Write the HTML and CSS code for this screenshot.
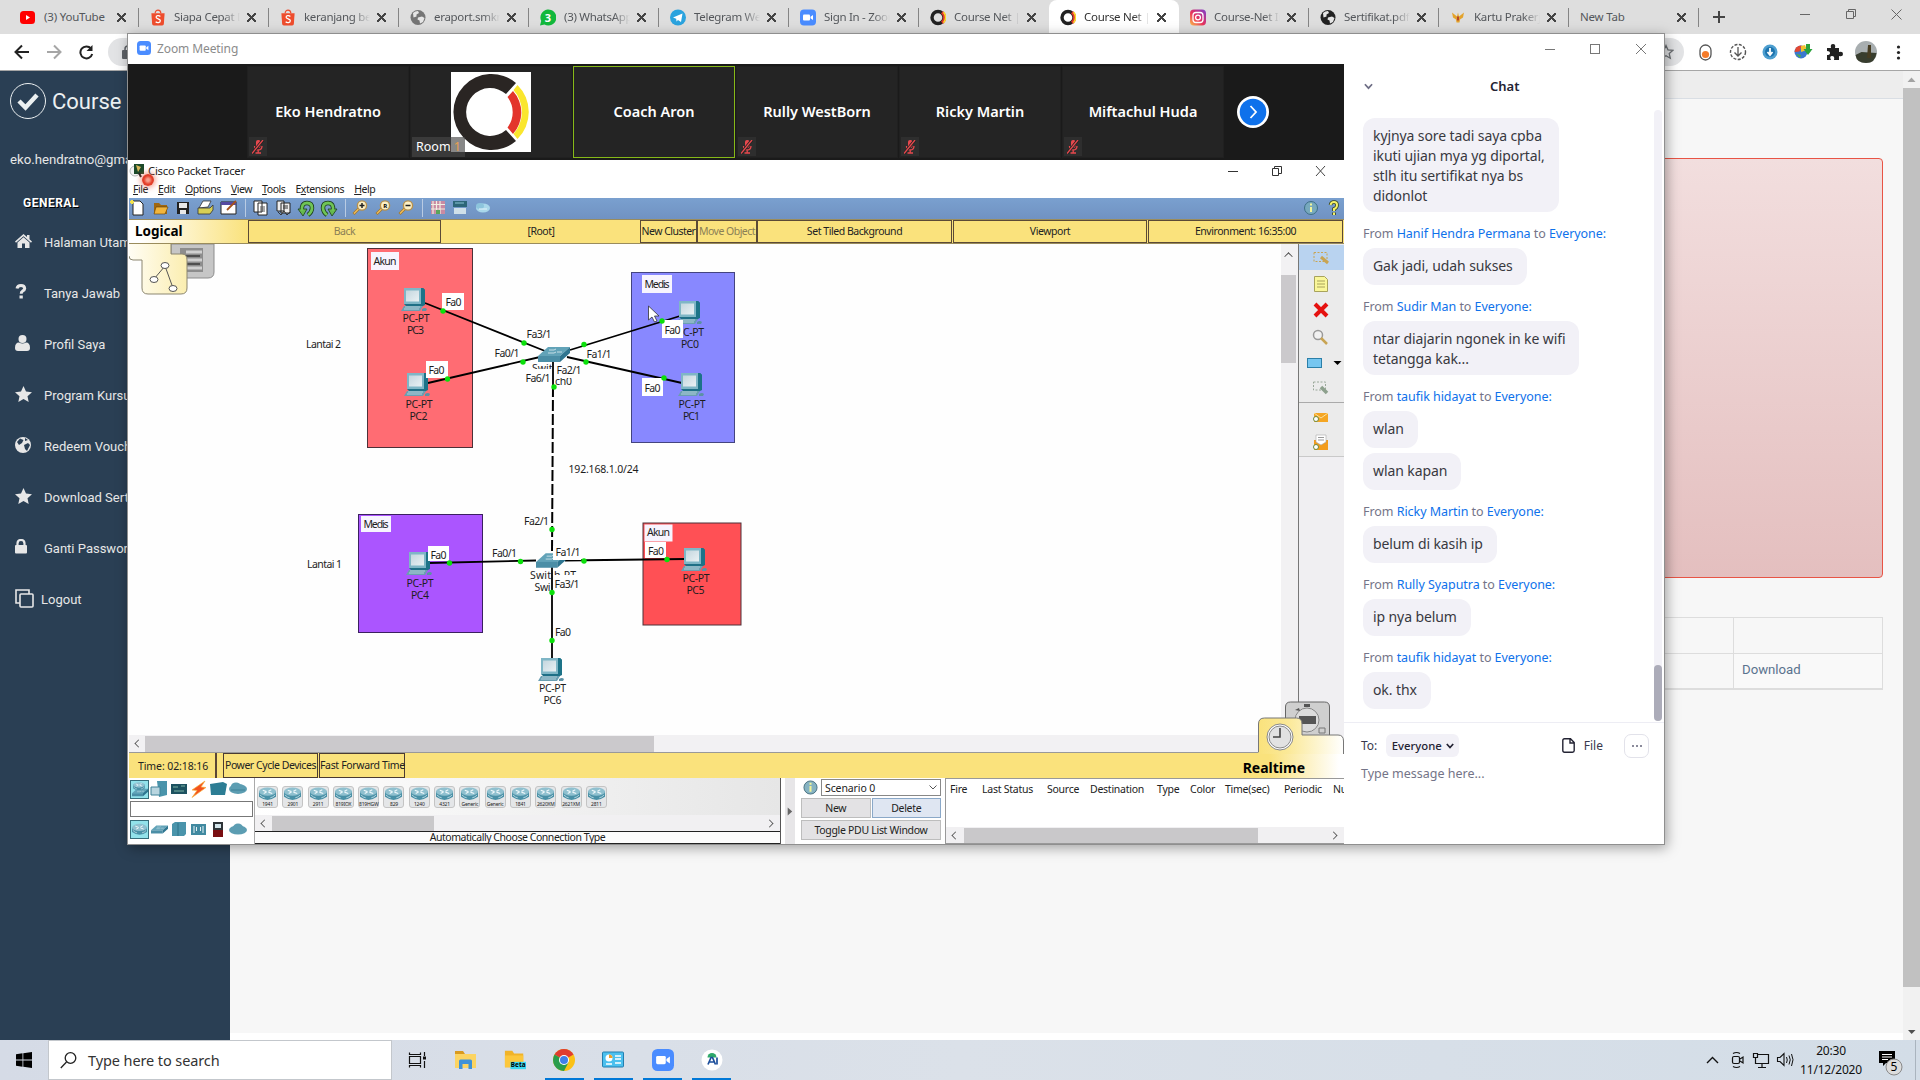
FILE: index.html
```html
<!DOCTYPE html>
<html lang="id">
<head>
<meta charset="utf-8">
<title>Course Net</title>
<link rel="stylesheet" href="styles.css">
</head>
<body>
<svg class="defs" width="0" height="0">
  <defs>
    <linearGradient id="gScreen" x1="0" y1="0" x2="1" y2="1"><stop offset="0" stop-color="#c4d6de"/><stop offset="1" stop-color="#eaf1f4"/></linearGradient>
    <linearGradient id="gTab" x1="0" y1="0" x2="1" y2="0"><stop offset="0" stop-color="#fffdf4"/><stop offset="1" stop-color="#fbeeb0"/></linearGradient>
    <linearGradient id="gRt" x1="0" y1="0" x2="1" y2="0"><stop offset="0" stop-color="#fae27c"/><stop offset=".35" stop-color="#fbe998"/><stop offset="1" stop-color="#fff"/></linearGradient>
    <linearGradient id="gIg" x1="0" y1="1" x2="1" y2="0"><stop offset="0" stop-color="#fdc04a"/><stop offset=".45" stop-color="#e8325c"/><stop offset="1" stop-color="#7a3fd0"/></linearGradient>
  </defs>
  <symbol id="pc" viewBox="0 0 28 24">
    <path d="M3 0H22L24 2V17L20 19H6L3 16Z" fill="#1f6f86"/><path d="M3 0H20V16H3Z" fill="#7fb6c6"/><path d="M5 2.500H18V13.500H5Z" fill="url(#gScreen)"/>
    <path d="M3 18H22L19 23H0Z" fill="#6a9fb2"/><path d="M4 19H19M3 21H18" stroke="#c3dbe3" stroke-width=".8"/><path d="M21 21q3-2 5 0l-1 2h-4z" fill="#5b91a5"/><path d="M20 0h2l2 2v14l-4 2z" fill="#1d7388"/>
  </symbol>
  <symbol id="switch" viewBox="0 0 32 15"><path d="M10 0H32L22 9H0Z" fill="#62a3b8"/><path d="M0 9H22V15H0Z" fill="#4b8ea6"/><path d="M22 9L32 0V6L22 15Z" fill="#2e7590"/><path d="M11 3h5l2-1M19 5h5M10 6h6l2-1" stroke="#c5dee6" fill="none"/></symbol>
  <symbol id="router" viewBox="0 0 18 14"><path d="M0 4v6q9 6.500 18 0V4z" fill="#4990a6"/><ellipse cx="9" cy="4.500" rx="9" ry="4.300" fill="#8fc0cf"/><path d="M4 3l4 1.500M10 5l4 1.500M13 2.500L10 4M5 6.500L8 5" stroke="#eef7fa" stroke-width="1.200"/><path d="M1 8q3 3 5 3M12 11q3-.5 5-3" stroke="#b9d8e1" fill="none"/></symbol>
  <symbol id="shopee" viewBox="0 0 16 18"><path d="M1 4.500H15L14.200 16Q14 17.500 12.500 17.500H3.500Q2 17.500 1.800 16Z" fill="#ee4d2d"/><path d="M5 4.500C5 0 11 0 11 4.500" fill="none" stroke="#ee4d2d" stroke-width="1.300"/><path d="M10.500 8C9 6.500 5.800 6.800 6 8.700 6.200 10.700 10.500 10.300 10.500 12.500 10.400 14.800 7 15 5.500 13.500" fill="none" stroke="#fff" stroke-width="1.300"/></symbol>
  <symbol id="globe" viewBox="0 0 16 16"><circle cx="8" cy="8" r="7.500" fill="currentColor"/><path d="M3 3.500Q5 1.500 8 1.500L9 3.500 6.500 5 6.500 7 3.500 8ZM8 8l4-1 2.500 1.500-1.500 4-3 1.500-.5-3L7.500 10Z" fill="#e6e6e6"/></symbol>
  <symbol id="cn" viewBox="0 0 16 16"><circle cx="8" cy="8" r="6" fill="none" stroke="#222" stroke-width="3.400"/><path d="M12 2.800A6.500 6.500 0 0 1 12 13.200" fill="none" stroke="#e33a2c" stroke-width="3.200"/><path d="M13.500 2.800A7.600 7.600 0 0 1 13.500 13.200" fill="none" stroke="#f9df2c" stroke-width="1.500"/></symbol>
  <symbol id="zoom" viewBox="0 0 16 16"><rect width="16" height="16" rx="4" fill="#4a8cff"/><rect x="3" y="5" width="7" height="6" rx="1" fill="#fff"/><path d="M10.500 7.300L13 5.500V10.500L10.500 8.700Z" fill="#fff"/></symbol>
  <symbol id="mute" viewBox="0 0 12 14"><rect x="4" y="0" width="4.500" height="8" rx="2" fill="#e8484d"/><path d="M2.500 6q0 4 3.700 4T10 6M6.200 10v3M3.500 13h5.500" fill="none" stroke="#e8484d" stroke-width="1.300"/><path d="M0 13.500L11 0" stroke="#242424" stroke-width="3"/><path d="M0 13.500L11 0" stroke="#e8484d" stroke-width="1.300"/></symbol>
  <symbol id="star" viewBox="0 0 17 16"><path d="M8.500 0L11 5.500 17 6.200 12.500 10.200 13.700 16 8.500 13 3.300 16 4.500 10.200 0 6.200 6 5.500Z" fill="currentColor"/></symbol>
  <symbol id="mag" viewBox="0 0 16 16"><path d="M7 9L1.500 14.500" stroke="#a5782b" stroke-width="2.800"/><path d="M7 9L2 14" stroke="#f0c060" stroke-width="1.200"/><circle cx="10" cy="6" r="4.600" fill="#fdf0c4" stroke="#b8924e" stroke-width="1.400"/></symbol>
</svg>

<div class="browser">
  <div class="tabs">
    <div class="tab"><svg class="fav" viewBox="0 0 16 16"><rect y="1.500" width="15" height="13" rx="3.500" fill="#f00"/><path d="M6 5.500L10 8 6 10.500Z" fill="#fff"/></svg><span class="t full">(3) YouTube</span><i class="x"></i></div>
    <div class="tab"><svg class="fav"><use href="#shopee"/></svg><span class="t">Siapa Cepat D</span><i class="x"></i></div>
    <div class="tab"><svg class="fav"><use href="#shopee"/></svg><span class="t">keranjang bel</span><i class="x"></i></div>
    <div class="tab"><svg class="fav gray"><use href="#globe"/></svg><span class="t">eraport.smkn</span><i class="x"></i></div>
    <div class="tab"><svg class="fav" viewBox="0 0 16 16"><path d="M0 16L1.200 11.500A8 8 0 1 1 4.500 15Z" fill="#12b83c"/><text x="8" y="12" text-anchor="middle" class="favnum">3</text></svg><span class="t">(3) WhatsApp</span><i class="x"></i></div>
    <div class="tab"><svg class="fav" viewBox="0 0 16 16"><circle cx="8" cy="8" r="8" fill="#2ba3de"/><path d="M3 8L12.500 4 11 12.500 8 10.500 6.500 12 6.200 9.300Z" fill="#fff"/></svg><span class="t">Telegram Web</span><i class="x"></i></div>
    <div class="tab"><svg class="fav"><use href="#zoom"/></svg><span class="t">Sign In - Zoom</span><i class="x"></i></div>
    <div class="tab nosep"><svg class="fav"><use href="#cn"/></svg><span class="t">Course Net | B</span><i class="x"></i></div>
    <div class="tab on nosep"><svg class="fav"><use href="#cn"/></svg><span class="t">Course Net | B</span><i class="x"></i></div>
    <div class="tab"><svg class="fav" viewBox="0 0 16 16"><rect width="16" height="16" rx="4" fill="url(#gIg)"/><rect x="3" y="3" width="10" height="10" rx="3" fill="none" stroke="#fff" stroke-width="1.300"/><circle cx="8" cy="8" r="2.400" fill="none" stroke="#fff" stroke-width="1.300"/></svg><span class="t">Course-Net In</span><i class="x"></i></div>
    <div class="tab"><svg class="fav dark"><use href="#globe"/></svg><span class="t">Sertifikat.pdf</span><i class="x"></i></div>
    <div class="tab"><svg class="fav" viewBox="0 0 16 16"><path d="M2 3L7 7 8 3 9 7 14 3 13 8 10 10 9.500 13H6.500L6 10 3 8Z" fill="#e3a32c"/><path d="M7 7h2v4H7z" fill="#b6462a"/></svg><span class="t">Kartu Prakerja</span><i class="x"></i></div>
    <div class="tab"><span class="t full wide">New Tab</span><i class="x"></i></div>
    <svg class="plus" viewBox="0 0 12 12"><path d="M6 0V12M0 6H12" stroke="#444" stroke-width="2"/></svg>
    <svg class="winctl" viewBox="0 0 102 12"><path d="M0 6.500H10" stroke="#666"/><path d="M46.500 3.500h7v7h-7zM48.500 3.500v-2h7v7h-2" fill="none" stroke="#666"/><path d="M91.500 1.500l10 10M101.500 1.500l-10 10" stroke="#666"/></svg>
  </div>
  <div class="urlbar">
    <svg class="nav" viewBox="0 0 80 16"><path d="M15 8H2M8 1.500L1.500 8 8 14.500" fill="none" stroke="#222" stroke-width="2"/><path d="M33 8H46M40 1.500L46.500 8 40 14.500" fill="none" stroke="#a6a6a6" stroke-width="2"/><path d="M77 4.500A6 6 0 1 0 78.200 10" fill="none" stroke="#222" stroke-width="2"/><path d="M78.500 1V7H72.500Z" fill="#222"/></svg>
    <div class="omni"><svg viewBox="0 0 12 14" width="12" height="14"><rect y="5" width="12" height="9" rx="1" fill="#5f6368"/><path d="M3 6V4q0-3 3-3t3 3v2" fill="none" stroke="#5f6368" stroke-width="1.500"/></svg><svg viewBox="0 0 16 16" width="16" height="16"><path d="M8 1.500L10 6 14.800 6.400 11.200 9.600 12.300 14.300 8 11.800 3.700 14.300 4.800 9.600 1.200 6.400 6 6Z" fill="none" stroke="#6b6f73" stroke-width="1.300"/></svg></div>
    <svg class="exts" viewBox="0 0 206 24">
      <rect x="4" y="5" width="11" height="15" rx="5.500" fill="#fff" stroke="#555" stroke-width="1.300"/><circle cx="9.500" cy="14.500" r="3.600" fill="#f47b2a"/>
      <circle cx="42" cy="12" r="7.500" fill="none" stroke="#555" stroke-width="1.400" stroke-dasharray="3 1.500"/><path d="M42 7v9M38.500 12.500L42 16l3.500-3.500" fill="none" stroke="#555" stroke-width="1.300"/>
      <circle cx="74" cy="12" r="7.500" fill="#4e9fd0"/><circle cx="74" cy="12" r="5" fill="#1d74ae"/><path d="M74 8v6M71.500 12l2.500 3 2.500-3" fill="none" stroke="#fff" stroke-width="1.800"/>
      <circle cx="105" cy="12" r="6.500" fill="#3b78cf"/><path d="M98.500 12a6.500 6.500 0 0 1 7-6.500l-2 6z" fill="#e34832"/><path d="M105 6l4-1 2 5-6 2z" fill="#f2c12e"/><path d="M110 4h4v5h2.500l-4.500 6-4.500-6h2.500z" fill="#2ba23c"/><path d="M100 14l5 1-1 3z" fill="#4fae4a"/>
      <path d="M131 8h4q-1-4 2-4t2 4h4v4q4-1 4 2t-4 2v4h-5q1-4-2-4t-1 4h-4v-5q3 0 3-2t-3-2z" fill="#222"/>
      <circle cx="170" cy="12" r="11" fill="#a8aeb0"/><path d="M159.500 15l6-3 15 1q-1 10-10.500 10T159.500 15z" fill="#383d2e"/><path d="M172 5h3v13h-4z" fill="#463c22"/>
      <g fill="#222"><circle cx="202.500" cy="7" r="1.600"/><circle cx="202.500" cy="12.500" r="1.600"/><circle cx="202.500" cy="18" r="1.600"/></g>
    </svg>
  </div>
  <div class="page">
    <nav class="side">
      <div class="brand"><svg viewBox="0 0 38 38" width="38" height="38"><circle cx="19" cy="19" r="17.500" fill="none" stroke="#ecf0f1"/><path d="M10 19l6.500 6.500L28 13" fill="none" stroke="#ecf0f1" stroke-width="4.500"/></svg><span>Course</span></div>
      <div class="mail">eko.hendratno@gmail.com</div>
      <div class="gen">GENERAL</div>
      <a><svg viewBox="0 0 17 16"><path d="M8.500 1L0 8.500 1 9.700 8.500 3.200 16 9.700 17 8.500 14.500 6.200V2H12V4Z" fill="currentColor"/><path d="M2.500 9.500L8.500 4.300 14.500 9.500V15H10V10.500H7V15H2.500Z" fill="currentColor"/></svg>Halaman Utama</a>
      <a><svg viewBox="0 0 17 16"><path d="M2 4.500Q2.500 1.500 6 1.500T9.700 4.500Q9.500 6.300 7.500 7.200 6.200 8 6.200 9.800" fill="none" stroke="currentColor" stroke-width="3"/><path d="M4.500 11.500h3.300v3H4.500z" fill="currentColor"/></svg>Tanya Jawab</a>
      <a><svg viewBox="0 0 17 16"><circle cx="7.500" cy="4" r="4" fill="currentColor"/><path d="M0 13Q0 7.500 4 7.500 7.500 9.500 11 7.500 15 7.500 15 13 15 16 12 16H3Q0 16 0 13Z" fill="currentColor"/></svg>Profil Saya</a>
      <a><svg><use href="#star"/></svg>Program Kursus</a>
      <a><svg viewBox="0 0 17 16"><circle cx="8" cy="8" r="8" fill="currentColor"/><path d="M5 1.500L8.500 3 7 6 4 8 2 5ZM9 8l4-2 2 2-3 6-2-2ZM10 1l3 2-3 1z" fill="#2a3f54"/></svg>Redeem Voucher</a>
      <a><svg><use href="#star"/></svg>Download Sertifikat</a>
      <a><svg viewBox="0 0 17 16"><rect y="6" width="12" height="8.500" rx="1" fill="currentColor"/><path d="M2.500 7V4.500Q2.500 1 6 1T9.500 4.500V7" fill="none" stroke="currentColor" stroke-width="2.200"/></svg>Ganti Password</a>
      <a class="out"><svg viewBox="0 0 19 19"><path d="M5 14H1V1H14V5" fill="none" stroke="currentColor" stroke-width="1.600"/><rect x="5" y="5" width="13" height="13" rx="1" fill="none" stroke="currentColor" stroke-width="1.600"/></svg>Logout</a>
    </nav>
    <main class="main">
      <div class="topnav"></div>
      <div class="body">
        <div class="alert"></div>
        <div class="grid"><div></div><div></div><div></div><div class="dl">Download</div></div>
      </div>
    </main>
    <div class="vbar"><svg viewBox="0 0 17 17"><path d="M4.500 11L8.500 6.500 12.500 11Z" fill="#a3a3a3"/></svg><div class="thumb"></div><svg viewBox="0 0 17 17"><path d="M5 7H12.500L8.700 11Z" fill="#505050"/></svg></div>
  </div>
</div>

<section class="zoomwin">
  <header class="ztitle"><svg width="14" height="14"><use href="#zoom"/></svg><span>Zoom Meeting</span><svg class="zctl" viewBox="0 0 102 12"><path d="M0 6.500H10" stroke="#777"/><rect x="45.500" y="1.500" width="9" height="9" fill="none" stroke="#777"/><path d="M91 1l10 10M101 1l-10 10" stroke="#777"/></svg></header>
  <div class="zbody">
    <div class="share">
      <div class="gallery">
        <div class="tile"><b>Eko Hendratno</b><span class="mic"><svg><use href="#mute"/></svg></span></div>
        <div class="tile"><svg class="clogo" viewBox="0 0 80 80"><rect width="80" height="80" fill="#fff"/><path d="M65 11A38 38 0 1 0 65 69L55 58A24 24 0 1 1 55 22Z" fill="#2a2523"/><path d="M66.500 13A38 38 0 0 1 66.500 67L62.500 62A33 33 0 0 0 62.500 18Z" fill="#fae62d"/><path d="M62 19A32 32 0 0 1 62 62L56.500 55.500A25 25 0 0 0 56.500 25Z" fill="#e3342c"/></svg><span class="room">Room <em>1</em></span></div>
        <div class="tile act"><b>Coach Aron</b></div>
        <div class="tile"><b>Rully WestBorn</b><span class="mic"><svg><use href="#mute"/></svg></span></div>
        <div class="tile"><b>Ricky Martin</b><span class="mic"><svg><use href="#mute"/></svg></span></div>
        <div class="tile"><b>Miftachul Huda</b><span class="mic"><svg><use href="#mute"/></svg></span></div>
        <svg class="next" viewBox="0 0 32 32"><circle cx="16" cy="16" r="16" fill="#fff"/><circle cx="16" cy="16" r="13.300" fill="#0e71eb"/><path d="M13.500 10l5.500 6-5.500 6" fill="none" stroke="#fff" stroke-width="1.800"/></svg>
      </div>
      <div class="pt">
        <div class="pttitle"><svg width="24" height="22" viewBox="0 0 24 22"><circle cx="6" cy="11" r="5" fill="#f4f4f4" stroke="#b5b5b5"/><path d="M5 4h10v10H5z" fill="#1c4a2a"/><path d="M7 5l5 2-3 5z" fill="#d9b85a"/><path d="M10 13l2 4" stroke="#222" stroke-width="2"/></svg><span>Cisco Packet Tracer</span><svg class="ptctl" viewBox="0 0 96 12"><path d="M-2 6.500H8" stroke="#333"/><path d="M42.500 3.500h6v7h-6zM44.500 3.500v-2h7v7h-3" fill="none" stroke="#333"/><path d="M86 1l9 10M95 1l-9 10" stroke="#444"/></svg></div>
        <div class="menu"><span><u>F</u>ile</span><span><u>E</u>dit</span><span><u>O</u>ptions</span><span><u>V</u>iew</span><span><u>T</u>ools</span><span>E<u>x</u>tensions</span><span><u>H</u>elp</span></div>
        <svg class="tools" viewBox="129 198 1215 21">
          <path d="M133 201h7l3 3v11h-10z" fill="#fff" stroke="#222"/><path d="M130 202h4M132 200v4" stroke="#f2e24a" stroke-width="2"/>
          <path d="M154 203h5l2 2h6v9h-13z" fill="#a0670f"/><path d="M156 207h12l-3 7h-11z" fill="#f2b53c" stroke="#5a3a08" stroke-width=".6"/>
          <path d="M177 202h12v12h-12z" fill="#222"/><path d="M179 203h8v5h-8zM180 210h6v4h-6z" fill="#e8e8e8"/>
          <path d="M199 208l4-7h8l-3 6z" fill="#fff" stroke="#333" stroke-width=".8"/><path d="M198 208h12l3-3v5l-3 4h-12z" fill="#d6cf55" stroke="#333" stroke-width=".8"/>
          <path d="M221 202h15v12h-15z" fill="#fff" stroke="#222"/><path d="M221 202h15v3h-15z" fill="#554aa0"/><path d="M227 210l9-9" stroke="#a5521c" stroke-width="1.800"/>
          <path d="M245.500 199v18M345.500 199v18M422.500 199v18" stroke="#b9cbe3"/>
          <path d="M254 201h8v11h-8zM258 203h9v12h-9z" fill="#fff" stroke="#222"/><path d="M260 207h5M260 209h5M260 211h5" stroke="#555"/>
          <path d="M277 201h7v10h-7zM281 203h9v10h-9z" fill="#eee" stroke="#222"/><path d="M278 212l3 3 3-4 3 4 3-3M283 206h5M283 208h5" stroke="#333" fill="none"/>
          <path d="M302 211q-1-8 5-8 5 0 5 5 0 4-4 7" fill="none" stroke="#1c3c1c" stroke-width="4.400"/><path d="M298 209l5 7 4-7z" fill="#66b94d" stroke="#1c3c1c" stroke-width=".8"/><path d="M302 211q-1-8 5-8 5 0 5 5 0 4-4 7" fill="none" stroke="#6fc455" stroke-width="2.800"/>
          <path d="M333 211q1-8-5-8-5 0-5 5 0 4 4 7" fill="none" stroke="#1c3c1c" stroke-width="4.400"/><path d="M337 209l-5 7-4-7z" fill="#66b94d" stroke="#1c3c1c" stroke-width=".8"/><path d="M333 211q1-8-5-8-5 0-5 5 0 4 4 7" fill="none" stroke="#6fc455" stroke-width="2.800"/>
          <use href="#mag" x="352" y="199" width="16" height="17"/><use href="#mag" x="375" y="199" width="16" height="17"/><use href="#mag" x="398" y="199" width="16" height="17"/>
          <path d="M359.500 205.500h5M362 203v5M405.500 205.500h5" stroke="#222" stroke-width="1.500"/><text x="385" y="208" class="r" text-anchor="middle">R</text>
          <path d="M431 201h14v13h-14z" fill="#c98aa3"/><path d="M433 201v13M436.500 201v13M440 201v13M431 204.500h14M431 209h14" stroke="#f2efe2" stroke-width="1.200"/><path d="M436 210h4v4h-4z" fill="#5aa45a"/>
          <path d="M453 201h14v6h-14z" fill="#2d6678"/><path d="M454 208h12v6h-12z" fill="#cfe0ea"/><path d="M455 203h9" stroke="#8cc5d5"/>
          <ellipse cx="483" cy="208" rx="7" ry="4.500" fill="#a9d7ea"/><ellipse cx="480" cy="206" rx="4" ry="3" fill="#8cc4dc"/><path d="M479 209h8" stroke="#e5f4fa"/>
          <circle cx="1311" cy="208" r="6.500" fill="#77a9bd" stroke="#3e6f86"/><path d="M1311 203.500v2M1311 207v5" stroke="#f3f59a" stroke-width="2"/>
          <path d="M1330.500 205q.5-3 3.500-3t3 3-3 4v2M1334 212.500v2.500" fill="none" stroke="#33411c" stroke-width="3.600"/><path d="M1330.500 205q.5-3 3.500-3t3 3-3 4v2M1334 212.500v2.500" fill="none" stroke="#f4f16a" stroke-width="2"/>
        </svg>
        <div class="ybar"><strong>Logical</strong><span class="dis b">Back</span><span>[Root]</span><span class="b tight">New Cluster</span><span class="b tight dis">Move Object</span><span class="b">Set Tiled Background</span><span class="b">Viewport</span><span class="b">Environment: 16:35:00</span></div>
        <div class="work">
          <svg class="canvas" viewBox="129 244 1152 491">
            <path d="M171 244H214V272Q214 278 208 278H171Z" fill="#c6c6c6" stroke="#8c8c8c"/><path d="M180 248h23v24h-23z" fill="#8d8d8d"/><path d="M186 252h16M186 260h16M186 268h16" stroke="#d0d0d0" stroke-width="3"/><path d="M184 256h16M184 264h16" stroke="#4f4f4f" stroke-width="2"/>
            <path d="M129 244H171V254H182Q187 254 187 260V288Q187 294 181 294H148Q142 294 142 288V260H133Q129 260 129 256Z" fill="url(#gTab)"/><path d="M171 244V254H182Q187 254 187 260V288Q187 294 181 294H148Q142 294 142 288V260H133Q129 260 129 256" fill="none" stroke="#8b8670"/>
            <path d="M165 266L154 279M165 266L173 288" stroke="#555"/><g fill="#fff" stroke="#555"><ellipse cx="165" cy="265.500" rx="4" ry="3"/><ellipse cx="154" cy="279.500" rx="4" ry="3"/><ellipse cx="173" cy="288.500" rx="4" ry="3"/></g>
            <g stroke="#4d3038" stroke-width="1"><rect x="367.500" y="248.500" width="105" height="199" fill="#ff6c73"/><rect x="631.500" y="272.500" width="103" height="170" fill="#8888ff" stroke="#444480"/><rect x="358.500" y="514.500" width="124" height="118" fill="#ab55ff" stroke="#3b2060"/><rect x="643" y="523" width="98" height="102" fill="#ff5055"/></g>
            <g fill="#f7f4fe"><rect x="371" y="252" width="28" height="18"/><rect x="642" y="275" width="30" height="18"/><rect x="361" y="516" width="30" height="16"/><rect x="644.500" y="524.500" width="28" height="17"/></g>
            <g stroke="#000" stroke-width="1.800"><path d="M425 303L545 351M428 383L540 357M680 316L570 350M682 383L567 357M429 563L536 560.500M565 560.500L685 559M552 567V658M553 360V386"/><path d="M553 386L552 556" stroke-width="2" stroke-dasharray="11 3"/></g>
            <use href="#pc" x="401" y="288" width="28" height="24"/><use href="#pc" x="404" y="373" width="28" height="24"/><use href="#pc" x="676" y="301" width="28" height="24"/><use href="#pc" x="678" y="373" width="28" height="24"/><use href="#pc" x="406" y="552" width="28" height="24"/><use href="#pc" x="681" y="548" width="28" height="24"/><use href="#pc" x="538" y="658" width="28" height="24"/>
            <use href="#switch" x="538" y="347" width="32" height="15"/><use href="#switch" x="536" y="553" width="31" height="15"/>
            <g fill="#fff"><rect x="442" y="293" width="22" height="17"/><rect x="426" y="361" width="22" height="17"/><rect x="662" y="320" width="21" height="18"/><rect x="642" y="378" width="21" height="18"/><rect x="428" y="546" width="21" height="15"/><rect x="645" y="542" width="21" height="16"/><rect x="553" y="546" width="28" height="14"/></g>
            <g fill="#0be00b"><circle cx="443" cy="311" r="2.700"/><circle cx="524" cy="343" r="2.700"/><circle cx="447.500" cy="379" r="2.700"/><circle cx="523" cy="362" r="2.700"/><circle cx="584" cy="344.500" r="2.700"/><circle cx="662" cy="321" r="2.700"/><circle cx="586" cy="362" r="2.700"/><circle cx="664" cy="378" r="2.700"/><circle cx="554" cy="387" r="2.700"/><circle cx="552" cy="529.500" r="2.700"/><circle cx="520.500" cy="561.500" r="2.700"/><circle cx="584" cy="561" r="2.700"/><circle cx="449.500" cy="563" r="2.700"/><circle cx="667" cy="559.500" r="2.700"/><circle cx="552" cy="592.500" r="2.700"/><circle cx="552" cy="640.500" r="2.700"/></g>
            <g class="lbl">
              <text x="306" y="347.500" textLength="35">Lantai 2</text><text x="307" y="568" textLength="35">Lantai 1</text>
              <text x="373.500" y="265" textLength="23">Akun</text><text x="644.500" y="288" textLength="25">Medis</text><text x="363.500" y="527.500" textLength="25">Medis</text><text x="647" y="536" textLength="23">Akun</text>
              <text x="402.500" y="322" textLength="27">PC-PT</text><text x="407" y="334" textLength="17">PC3</text>
              <text x="405.500" y="408" textLength="27">PC-PT</text><text x="409.500" y="420" textLength="18">PC2</text>
              <text x="683" y="336" textLength="21">C-PT</text><text x="681" y="348" textLength="18">PC0</text>
              <text x="678.500" y="408" textLength="27">PC-PT</text><text x="683" y="420" textLength="17">PC1</text>
              <text x="406.500" y="586.500" textLength="27">PC-PT</text><text x="411" y="598.500" textLength="18">PC4</text>
              <text x="682.500" y="582" textLength="27">PC-PT</text><text x="686.500" y="594" textLength="18">PC5</text>
              <text x="539" y="692" textLength="27">PC-PT</text><text x="543.500" y="704" textLength="18">PC6</text>
              <text x="445.500" y="306" textLength="16">Fa0</text><text x="428.500" y="374" textLength="16">Fa0</text><text x="664.500" y="334" textLength="16">Fa0</text><text x="644.500" y="391.500" textLength="16">Fa0</text><text x="430.500" y="558.500" textLength="16">Fa0</text><text x="648" y="555" textLength="16">Fa0</text><text x="555" y="636" textLength="16">Fa0</text>
              <text x="526.500" y="338" textLength="25">Fa3/1</text><text x="494.500" y="357" textLength="25">Fa0/1</text><text x="586.500" y="358" textLength="25">Fa1/1</text><text x="556.500" y="374" textLength="25">Fa2/1</text><text x="525.500" y="382" textLength="25">Fa6/1</text>
              <text x="524" y="524.500" textLength="25">Fa2/1</text><text x="492" y="557" textLength="25">Fa0/1</text><text x="555.500" y="556" textLength="25">Fa1/1</text><text x="554.500" y="588" textLength="25">Fa3/1</text>
              <text x="568.500" y="472.500" textLength="70">192.168.1.0/24</text>
              <text x="530" y="579" textLength="21">Swit</text><text x="534.500" y="591" textLength="16">Swi</text>
              <svg x="530" y="364" width="23" height="5"><text x="2" y="8">Swit</text></svg><svg x="554" y="378" width="22" height="8"><text x="1" y="7" textLength="17">ch0</text></svg><svg x="554" y="569" width="24" height="6"><text x="0" y="10" textLength="22">h-PT</text></svg>
            </g>
            <path d="M648.500 306V320L652 317 654.500 322 657 321 654.500 316H659Z" fill="#fff" stroke="#333" stroke-width=".8"/>
          </svg>
          <div class="cv"><i class="up"></i><div class="cvt"></div></div>
          <svg class="rtool" viewBox="1298 244 46 491"><path d="M1298.500 244v491" stroke="#777"/><path d="M1299 244h45v213h-45z" fill="#ebebeb"/><path d="M1299 456.500h45" stroke="#c9c9c9"/><path d="M1299 245h45v25h-45z" fill="#b9d3f0"/><path d="M1299 402.500h45" stroke="#aaa"/>
            <rect x="1314" y="252.500" width="13" height="9" fill="none" stroke="#c8a453" stroke-dasharray="2 1.500"/><path d="M1321 257l7 6" stroke="#c8a453" stroke-width="3"/>
            <path d="M1314.500 276.500h10l3 3v12h-13z" fill="#faf79a" stroke="#a8a35c"/><path d="M1317 281h8M1317 284h8M1317 287h8" stroke="#a8a35c"/>
            <path d="M1315 304l12 12M1327 304l-12 12" stroke="#e5110f" stroke-width="4"/>
            <circle cx="1318" cy="335" r="4.500" fill="#f1f1f1" stroke="#999" stroke-width="1.500"/><path d="M1321 338l6 6" stroke="#c8a453" stroke-width="2.500"/>
            <rect x="1307.500" y="358.500" width="14" height="9" fill="#76c6f0" stroke="#2b7fa8"/><path d="M1333.500 361h8l-4 4z" fill="#000"/>
            <rect x="1313.500" y="382" width="12" height="8" fill="none" stroke="#9aa89a" stroke-dasharray="2 1.500"/><path d="M1321 387l6 6" stroke="#8da08d" stroke-width="3.500"/>
            <path d="M1314 413h14v9h-14z" fill="#f5a623"/><path d="M1314 413l7 5 7-5" fill="none" stroke="#fbe0a0"/><circle cx="1316" cy="419" r="2.500" fill="#fff" stroke="#6c8a3c"/>
            <path d="M1314 440h14v10h-14z" fill="#f39c1c"/><path d="M1316 435h10v7l-5 3-5-3z" fill="#fff" stroke="#aaa" stroke-width=".6"/><path d="M1318 437.500h6M1318 440h6" stroke="#999"/><circle cx="1316" cy="447" r="2.500" fill="#fff" stroke="#6c8a3c"/>
          </svg>
        </div>
        <div class="ch"><i class="lf"></i><div class="cht"></div></div>
        <div class="time"><span class="tm">Time: 02:18:16</span><i></i><span class="tb">Power Cycle Devices</span><span class="tb">Fast Forward Time</span><strong>Realtime</strong></div>
        <svg class="rt" viewBox="1256 699 88 55"><path d="M1285.500 753V707q0-5 5-5h34q5 0 5 5v46z" fill="#cfcfcf" stroke="#666"/><ellipse cx="1307" cy="720" rx="12" ry="12" fill="#dcdcdc" stroke="#888"/><path d="M1304 704h6v3h-6zM1295 710l4-2 1 3z" fill="#555"/><path d="M1299 716h17v8h-17z" fill="#555"/><path d="M1319 728h6v5h-6z" fill="none" stroke="#777"/><path d="M1258.500 754V724q0-6 6-6h32q5.500 0 5.500 6v11h36q5.500 0 5.500 6v13z" fill="url(#gRt)"/><path d="M1258.500 752V724q0-6 6-6h32q5.500 0 5.500 6v11h36q5.500 0 5.500 6v13" fill="none" stroke="#777"/><circle cx="1280" cy="737" r="13" fill="#fff" stroke="#888"/><circle cx="1280" cy="737" r="11" fill="#e2e2e2" stroke="#888"/><path d="M1280 728v9h-7" fill="none" stroke="#444" stroke-width="1.600"/></svg>
        <div class="bottom">
          <div class="cat">
            <svg viewBox="129 779 125 22"><rect x="130.500" y="780.500" width="18" height="18" fill="#92e2ea" stroke="#356d7a"/><use href="#switch" x="132" y="788" width="16" height="9"/><use href="#router" x="133" y="782" width="12" height="9"/><path d="M157 781h10v14l-8 2z" fill="#4a94ab"/><path d="M151 787h9v8h-9z" fill="#b8d5df" stroke="#3f8298"/><path d="M171 784h16v10h-16z" fill="#1d5260"/><path d="M173 787h5M181 786h4M174 791h10" stroke="#7cb3a5"/><path d="M205 781l-13 9 5 .5-5 7 14-10-5-.5z" fill="#f3511f" stroke="#f8b13a" stroke-width=".7"/><path d="M210 784l13-2 4 2-2 11h-14z" fill="#2c7d94"/><ellipse cx="238" cy="789" rx="9" ry="5" fill="#5c9db2"/><ellipse cx="236" cy="786" rx="5" ry="3.500" fill="#5c9db2"/><path d="M231 790h14" stroke="#3e8298"/></svg>
            <div class="inp"></div>
            <svg viewBox="129 818 125 24"><rect x="130.500" y="821.500" width="18" height="18" fill="#92e2ea" stroke="#356d7a"/><use href="#router" x="132" y="824" width="15" height="13"/><use href="#switch" x="151" y="826" width="17" height="9"/><path d="M172 825l3-2h11v12l-2 2h-12z" fill="#4a94ab"/><path d="M178 824v13" stroke="#2d7388"/><path d="M191 825h15v11h-15z" fill="#4089a0"/><path d="M194 827v7M203 827v7M196.500 828v4M200.500 828v4" stroke="#e4f1f5"/><path d="M213 823h10v8h-10z" fill="#2e3438"/><path d="M213 831h10v7h-10z" fill="#7a0e12"/><path d="M215 825h6v4h-6z" fill="#d3e4ea"/><ellipse cx="238" cy="831" rx="9" ry="4.500" fill="#5c9db2"/><ellipse cx="238" cy="828.500" rx="5" ry="4" fill="#5c9db2"/></svg>
          </div>
          <div class="dev">
            <div class="rs">
              <div class="rc"><svg><use href="#router"/></svg><span>1941</span></div><div class="rc"><svg><use href="#router"/></svg><span>2901</span></div><div class="rc"><svg><use href="#router"/></svg><span>2911</span></div><div class="rc"><svg><use href="#router"/></svg><span>819IOX</span></div><div class="rc"><svg><use href="#router"/></svg><span>819HGW</span></div><div class="rc"><svg><use href="#router"/></svg><span>829</span></div><div class="rc"><svg><use href="#router"/></svg><span>1240</span></div><div class="rc"><svg><use href="#router"/></svg><span>4321</span></div><div class="rc"><svg><use href="#router"/></svg><span>Generic</span></div><div class="rc"><svg><use href="#router"/></svg><span>Generic</span></div><div class="rc"><svg><use href="#router"/></svg><span>1841</span></div><div class="rc"><svg><use href="#router"/></svg><span>2620XM</span></div><div class="rc"><svg><use href="#router"/></svg><span>2621XM</span></div><div class="rc"><svg><use href="#router"/></svg><span>2811</span></div>
            </div>
            <div class="hs"><i class="lf"></i><div class="hst"></div><i class="rg"></i></div>
            <div class="auto">Automatically Choose Connection Type</div>
          </div>
          <div class="split"><svg viewBox="0 0 10 10" width="9" height="9"><path d="M3 0.500L8 5 3 9.500Z" fill="#666"/></svg></div>
          <div class="scen">
            <div class="sc1"><svg viewBox="0 0 16 16" width="15" height="15"><circle cx="8" cy="8" r="7" fill="#86b3c2" stroke="#47707f"/><path d="M8 3v2M8 6.500v6" stroke="#f1f39a" stroke-width="2.200"/></svg><div class="combo">Scenario 0<svg viewBox="0 0 8 5" width="8" height="5"><path d="M.5.500L4 4 7.500.500" fill="none" stroke="#555"/></svg></div></div>
            <div class="sc2"><button>New</button><button class="hot">Delete</button></div>
            <button>Toggle PDU List Window</button>
          </div>
          <div class="pdu">
            <div class="ph"><span>Fire</span><span>Last Status</span><span>Source</span><span>Destination</span><span>Type</span><span>Color</span><span>Time(sec)</span><span>Periodic</span><span>Num</span></div>
            <div class="hs"><i class="lf"></i><div class="pst"></div><i class="rg"></i></div>
          </div>
        </div>
        <i class="rec"></i>
      </div>
    </div>
    <aside class="chat">
      <div class="chd"><svg viewBox="0 0 8 6" width="9" height="7"><path d="M.8 1L4 4.500 7.200 1" fill="none" stroke="#6e6e85" stroke-width="1.500"/></svg><b>Chat</b></div>
      <div class="log">
        <div class="msgs">
          <p class="m">kyjnya sore tadi saya cpba<br>ikuti ujian mya yg diportal,<br>stlh itu sertifikat nya bs<br>didonlot</p>
          <p class="f">From <a>Hanif Hendra Permana</a> to <a>Everyone:</a></p>
          <p class="m">Gak jadi, udah sukses</p>
          <p class="f">From <a>Sudir Man</a> to <a>Everyone:</a></p>
          <p class="m">ntar diajarin ngonek in ke wifi<br>tetangga kak...</p>
          <p class="f">From <a>taufik hidayat</a> to <a>Everyone:</a></p>
          <p class="m">wlan</p>
          <p class="m">wlan kapan</p>
          <p class="f">From <a>Ricky Martin</a> to <a>Everyone:</a></p>
          <p class="m">belum di kasih ip</p>
          <p class="f">From <a>Rully Syaputra</a> to <a>Everyone:</a></p>
          <p class="m">ip nya belum</p>
          <p class="f">From <a>taufik hidayat</a> to <a>Everyone:</a></p>
          <p class="m">ok. thx</p>
        </div>
        <div class="ctrack"><div></div></div>
      </div>
      <div class="compose">
        <div class="to"><span>To:</span><div class="chip">Everyone<svg viewBox="0 0 8 6" width="8" height="6"><path d="M.8 1L4 4.500 7.200 1" fill="none" stroke="#232333" stroke-width="1.700"/></svg></div><svg class="fi" viewBox="0 0 13 15" width="13" height="15"><path d="M2.500.8H8.500L12.200 4.500V12.500Q12.200 14.200 10.500 14.200H2.500Q.8 14.200.8 12.500V2.500Q.8.800 2.500.800ZM8 1V5H12" fill="none" stroke="#232333" stroke-width="1.400"/></svg><span class="file">File</span><div class="more"><i></i><i></i><i></i></div></div>
        <div class="ph2">Type message here...</div>
      </div>
    </aside>
  </div>
</section>

<footer class="task">
  <div class="start"><svg viewBox="0 0 16 16" width="16" height="16"><path d="M0 2.300L6.500 1.300V7.600H0ZM7.300 1.200L16 0V7.600H7.300ZM0 8.400H6.500V14.700L0 13.700ZM7.300 8.400H16V16L7.300 14.800Z" fill="#000"/></svg></div>
  <div class="search"><svg viewBox="0 0 17 17" width="17" height="17"><circle cx="10.500" cy="6" r="5.300" fill="none" stroke="#222" stroke-width="1.300"/><path d="M6.500 10L.8 16" stroke="#222" stroke-width="1.300"/></svg><span>Type here to search</span></div>
  <div class="ti"><svg viewBox="0 0 18 18"><path d="M1.500 1.500V3.500H12.500V1.500M1.500 16.500V14.500H12.500V16.500M1.500 5.500h11v7h-11zM16.500 1v4M16.500 10v7" fill="none" stroke="#111" stroke-width="1.200"/><path d="M15 5.500h3v3h-3z" fill="#111"/></svg></div>
  <div class="ti"><svg viewBox="0 0 22 20"><path d="M0 1h8l2 3H0z" fill="#d99a1e"/><path d="M0 4h21v14H0z" fill="#fcd462"/><path d="M4 19v-8q0-1.500 1.500-1.500h10q1.500 0 1.500 1.500v8h-3.500v-5h-6v5z" fill="#3f92d8"/></svg></div>
  <div class="ti"><svg viewBox="0 0 24 20"><path d="M1 0h8l2 3h10v15H1z" fill="#f1b328"/><path d="M1 5h20v13H1z" fill="#fcc73c"/><path d="M7 12h17v8H7z" fill="#3bd8f0"/><text x="15.500" y="18" text-anchor="middle" class="beta">Beta</text></svg></div>
  <div class="ti on"><svg viewBox="0 0 22 22"><circle cx="11" cy="11" r="11" fill="#fbc116"/><path d="M11 11L1.500 5.500A11 11 0 0 1 20.500 5.500Z" fill="#df3d31"/><path d="M11 11L1.500 5.500A11 11 0 0 0 11 22L15.500 13.500Z" fill="#2a9d4c"/><circle cx="11" cy="11" r="5" fill="#fff"/><circle cx="11" cy="11" r="4" fill="#3f80ea"/></svg></div>
  <div class="ti on"><svg viewBox="0 0 22 18"><rect x=".5" y="1" width="21" height="15" rx="1" fill="#4cc0ee" stroke="#237fb0"/><circle cx="7" cy="7" r="3.500" fill="#fff"/><path d="M7 7V3.500A3.500 3.500 0 0 1 10.500 7Z" fill="#f0a028"/><path d="M13 5h6M13 8h6M4 13h6M13 12h6" stroke="#fff" stroke-width="1.500"/></svg></div>
  <div class="ti on"><svg class="big"><use href="#zoom"/></svg></div>
  <div class="ti on"><svg viewBox="0 0 22 22"><circle cx="11" cy="11" r="10.500" fill="#fff"/><path d="M6.500 8.500A4.500 4.500 0 0 1 15.500 8.500Z" fill="#2ea86a"/><path d="M7 15.500L10 8.500h1.500l3 7M8.500 13h5M16 8.500v7" fill="none" stroke="#1d4f9c" stroke-width="1.700"/></svg></div>
  <div class="tray">
    <svg viewBox="0 0 90 18" width="90" height="18"><path d="M2 12L7.500 6.500 13 12" fill="none" stroke="#111" stroke-width="1.400"/><rect x="27.500" y="5.500" width="7" height="7" rx="1.500" fill="none" stroke="#111" stroke-width="1.200"/><path d="M35 8l3-2v6l-3-2M28 2.500q3.500-2 7 0M28 15.500q3.500 2 7 0" fill="none" stroke="#111" stroke-width="1.200"/><path d="M52 3.500H63.500V12.500H50.500V8M57 13v3M53 16.500h8M48.500 2.500h4v4h-4zM50.500 7v3" fill="none" stroke="#111" stroke-width="1.200"/><path d="M72.500 6.500h2.500l4-4v12l-4-4h-2.500z" fill="none" stroke="#111" stroke-width="1.100"/><path d="M81.500 6q1.500 3 0 6M84 4.500q2.500 4 0 9M86.500 3q3 5.500 0 12" fill="none" stroke="#111"/></svg>
    <div class="clock"><div>20:30</div><div>11/12/2020</div></div>
    <svg class="nt" viewBox="0 0 26 26" width="26" height="26"><path d="M1 1h16v12H8l-3 3v-3H1z" fill="#000"/><path d="M4 4.500h10M4 7h10M4 9.500h6" stroke="#fff"/><circle cx="16" cy="17" r="8" fill="#ddd" stroke="#888"/><text x="16" y="21" text-anchor="middle">5</text></svg>
    <i class="peek"></i>
  </div>
</footer>
</body>
</html>
```
FILE: styles.css
```css
* { box-sizing: border-box; }
body { margin: 0; width: 1920px; height: 1080px; overflow: hidden; position: relative; font-family: "Noto Sans", "Open Sans", sans-serif; color: #222; display: flex; flex-direction: column; }
svg { display: block; flex: none; }
.defs { position: absolute; }
p { margin: 0; }

.browser { height: 1040px; display: flex; flex-direction: column; }
.tabs { height: 34px; background: #dedede; display: flex; padding-left: 9px; flex: none; }
.tab { width: 130px; height: 34px; display: flex; align-items: center; padding-left: 11px; position: relative; font-size: 11.500px; color: #54575b; }
.tab:not(.nosep)::after { content: ""; position: absolute; right: 0; top: 8px; width: 1px; height: 19px; background: #858585; }
.tab.on { background: #fff; border-radius: 8px 8px 0 0; color: #333; }
.fav { width: 16px; height: 17px; margin-right: 8px; }
.fav.gray { color: #757575; }
.fav.dark { color: #222; }
.favnum { font: bold 11px "Noto Sans", sans-serif; fill: #fff; }
.t { width: 66px; overflow: hidden; white-space: nowrap; letter-spacing: -.3px; line-height: 18px; margin-top: -1px; -webkit-mask-image: linear-gradient(90deg, #000 75%, transparent); }
.t.full { -webkit-mask-image: none; letter-spacing: -.2px; }
.t.wide { width: 90px; }
.x { width: 9px; height: 9px; margin-left: 7px; background: linear-gradient(45deg, transparent 44%, #444 44% 56%, transparent 56%), linear-gradient(-45deg, transparent 44%, #444 44% 56%, transparent 56%); }
.plus { width: 12px; height: 12px; margin: 11px 0 0 14px; }
.winctl { width: 102px; height: 12px; margin: 8px 18px 0 auto; }
.urlbar { height: 37px; flex: none; background: #fff; border-bottom: 1px solid #a6a6a6; display: flex; align-items: center; padding-left: 14px; }
.nav { width: 80px; height: 16px; }
.omni { width: 1576px; height: 28px; margin-left: 14px; border-radius: 14px; background: #e2e3e5; display: flex; align-items: center; justify-content: space-between; padding: 0 10px 0 14px; }
.exts { width: 206px; height: 24px; margin-left: 12px; }

.page { flex: 1; display: flex; background: #fff; min-height: 0; }
.side { width: 230px; background: #2a3f54; color: #e7e7e7; font-family: Roboto, "Liberation Sans", sans-serif; overflow: hidden; white-space: nowrap; }
.brand { height: 60px; display: flex; align-items: center; padding-left: 9px; font-size: 22px; color: #ecf0f1; gap: 5px; }
.mail { margin-top: 20px; height: 18px; line-height: 18px; padding-left: 10px; font-size: 13.200px; }
.gen { margin-top: 24px; height: 20px; line-height: 21px; padding-left: 23px; font-size: 12px; font-weight: bold; color: #fff; letter-spacing: .5px; text-shadow: 1px 1px #000; margin-bottom: 4px; }
.side a { display: flex; align-items: center; height: 51px; font-size: 13px; padding-left: 15px; }
.side a svg { width: 17px; height: 16px; margin: -3px 12px 0 0; }
.side a.out svg { width: 19px; height: 19px; margin-right: 7px; }
.main { flex: 1; display: flex; flex-direction: column; }
.topnav { height: 28px; background: #ededed; border-bottom: 1px solid #d9dee4; }
.body { height: 934px; background: #f7f7f7; padding: 59px 20px 0 30px; }
.alert { height: 420px; border: 1px solid #e85445; border-radius: 4px; background: linear-gradient(#f2dede, #e4bfbf); }
.grid { margin-top: 39px; display: grid; grid-template-columns: 1fr 148px; grid-template-rows: 36px 35px; border: 1px solid #ddd; }
.grid div { border-right: 1px solid #ddd; border-bottom: 1px solid #ddd; }
.grid div:nth-child(even) { border-right: 0; }
.grid .dl { padding: 7px 8px; font: 13.200px/18px Roboto, sans-serif; color: #5a738e; background: #f9f9f9; }
.vbar { width: 17px; background: #f1f1f1; display: flex; flex-direction: column; }
.vbar svg { width: 17px; height: 17px; }
.vbar .thumb { height: 899px; margin-bottom: 36px; background: #c1c1c1; }

.zoomwin { position: absolute; left: 127px; top: 33px; width: 1538px; height: 812px; background: #fff; border: 1px solid #8f8f8f; box-shadow: 2px 3px 12px rgba(0,0,0,.35); display: flex; flex-direction: column; }
.ztitle { height: 30px; display: flex; align-items: center; padding-left: 9px; font-size: 12px; color: #8b8b8b; gap: 6px; flex: none; letter-spacing: -.1px; }
.ztitle span, .ztitle svg:first-child { margin-top: -2px; }
.zctl { width: 102px; height: 12px; margin: -1px 17px 0 auto; }
.zbody { flex: 1; display: flex; min-height: 0; }
.share { width: 1216px; display: flex; flex-direction: column; }
.gallery { height: 96px; background: #1a1a1a; display: flex; padding: 2px 0 2px 119px; flex: none; gap: 1px; }
.tile { width: 162px; background: #242424; position: relative; display: flex; align-items: center; justify-content: center; color: #fff; font-size: 14.500px; border: 1px solid #202020; flex: none; }
.tile b { font-weight: 600; margin-top: -2px; }
.tile.act { border-color: #86b918; }
.mic { position: absolute; left: 1px; bottom: 1px; width: 18px; height: 19px; background: #2e2e2e; padding: 3px; }
.mic svg { width: 12px; height: 14px; }
.clogo { width: 80px; height: 80px; }
.room { position: absolute; left: 1px; bottom: 0; background: rgba(70,70,70,.65); padding: 0 4px; font-size: 12.500px; line-height: 20px; }
.room em { font-style: normal; color: #e8a050; }
.next { width: 32px; height: 32px; margin: 30px 0 0 12px; }

.pt { flex: 1; position: relative; background: #fff; display: flex; flex-direction: column; font-size: 10.500px; letter-spacing: -.45px; min-height: 0; overflow: hidden; padding-left: 1px; }
.pttitle { height: 22px; flex: none; display: flex; align-items: center; font-size: 11.300px; }
.pttitle span { margin: -1px 0 0 -5px; letter-spacing: -.25px; }
.ptctl { width: 96px; height: 12px; margin: -1px 18px 0 auto; overflow: visible; }
.menu { height: 16px; flex: none; display: flex; gap: 10px; padding-left: 4px; line-height: 15px; }
.tools { width: 1215px; height: 21px; background: linear-gradient(#7aa0cf, #7092c2); }
.r { font: bold 6px "Noto Sans", sans-serif; }
.ybar { height: 25px; flex: none; background: #fae27c; border: solid #9a8c5c; border-width: 1px 0; display: grid; grid-template-columns: 119px 194px 198px 57px 60px 196px 195px 196px; line-height: 22px; text-align: center; white-space: nowrap; }
.ybar strong { background: linear-gradient(90deg, #fff 10%, #fae27c); text-align: left; padding-left: 6px; font-size: 13.500px; font-weight: 700; color: #000; letter-spacing: 0; }
.ybar .b { border: 1px solid #5b4a36; margin-right: 1px; line-height: 21px; }
.ybar .tight { letter-spacing: -.52px; margin-right: 0; }
.dis { color: #8b7f55; }
.work { height: 491px; flex: none; display: flex; }
.canvas { width: 1152px; height: 491px; background: #fefefe; letter-spacing: 0; }
.lbl { font: 10.500px "Noto Sans", sans-serif; fill: #1d1d1d; }
.cv { width: 17px; background: #f2f1f3; }
.cvt { height: 88px; background: #cbc9cc; margin-top: 22px; width: 15px; }
.up, .lf, .rg { display: block; width: 7px; height: 7px; border: solid #444; border-width: 1.500px 0 0 1.500px; }
.up { transform: rotate(45deg) scale(.85); margin: 9px 0 -7px 4px; }
.lf { transform: rotate(-45deg) scale(.8); margin-left: 6px; }
.rg { transform: rotate(135deg) scale(.8); margin: 0 7px 0 auto; }
.rtool { width: 46px; height: 491px; background: #f0eff2; }
.ch { height: 18px; flex: none; background: #f2f1f3; display: flex; align-items: center; border-bottom: 1px solid #999; }
.cht { margin-left: 3px; width: 509px; height: 16px; background: #cbc9cc; }
.time { height: 25px; flex: none; background: linear-gradient(90deg, #fae27c 1140px, #fff 1210px); display: flex; align-items: center; white-space: nowrap; }
.tm { padding-left: 9px; width: 86px; letter-spacing: -.1px; }
.time i { width: 2px; height: 25px; background: #5a4636; margin-right: 6px; }
.tb { border: 1px solid #4a3a32; height: 25px; line-height: 22px; width: 95px; text-align: center; margin-right: 1px; }
.tb + .tb { width: 86px; letter-spacing: -.35px; }
.time strong { margin: 3px 39px 0 auto; font-size: 14px; color: #000; letter-spacing: 0; }
.rt { position: absolute; left: 1128px; top: 539px; width: 88px; height: 55px; }
.bottom { flex: 1; display: flex; background: #fff; min-height: 0; }
.cat { width: 126px; border-right: 1px solid #aaa; padding: 1px 0 0 0; }
.cat svg { width: 125px; }
.cat svg:first-child { height: 22px; }
.cat svg:last-child { height: 24px; }
.inp { width: 123px; height: 16px; margin-left: 1px; border: 1px solid #777; }
.dev { width: 526px; border-right: 1px solid #555; display: flex; flex-direction: column; background: linear-gradient(90deg, #fff, #e6e6e6); }
.rs { display: flex; gap: 4.300px; padding: 8px 2px 7px; height: 37px; flex: none; }
.rc { width: 21px; height: 22px; border: 1px solid #c4c4c4; border-radius: 3px; background: #e4e6e8; display: flex; flex-direction: column; align-items: center; }
.rc svg { width: 17px; height: 14px; }
.rc span { font-size: 5px; line-height: 6px; letter-spacing: -.2px; }
.hs { height: 16px; flex: none; background: #f1f0f2; display: flex; align-items: center; }
.hst { margin-left: 4px; width: 162px; height: 15px; background: #c9c8ca; }
.auto { flex: 1; border: solid #222; border-width: 1px 0; text-align: center; line-height: 11px; background: #fcfcfc; }
.split { width: 14px; display: flex; align-items: center; border-left: 4px solid #fff; background: #e7e6e8; }
.scen { width: 150px; padding: 1px 4px 3px 6px; display: flex; flex-direction: column; gap: 2px; }
.sc1, .sc2 { display: flex; gap: 1px; align-items: center; }
.sc1 { gap: 3px; padding-left: 2px; }
.combo { flex: 1; height: 17px; border: 1px solid #888; padding: 0 3px; display: flex; align-items: center; justify-content: space-between; line-height: 14px; letter-spacing: -.1px; }
.scen button { font: 10.500px "Noto Sans", sans-serif; color: #222; background: #e3e2e4; border: 1px solid #bdbdbd; height: 20px; padding: 0; flex: 1; line-height: 16px; letter-spacing: -.3px; }
.scen > button { flex: none; }
.scen button.hot { background: #dfe6f2; border-color: #8aa8c8; }
.pdu { flex: 1; border: solid #999; border-width: 1px 0 1px 1px; min-width: 0; overflow: hidden; display: flex; flex-direction: column; justify-content: space-between; }
.ph { display: grid; grid-template-columns: 32px 65px 43px 67px 33px 35px 59px 49px 40px; padding: 1px 0 0 4px; white-space: nowrap; line-height: 18px; letter-spacing: -.25px; }
.pst { margin-left: 5px; width: 294px; height: 15px; background: #c9c8ca; }
.rec { position: absolute; left: 14px; top: 14px; width: 12px; height: 12px; border-radius: 50%; background: radial-gradient(#f6a08e 15%, #e5402a 50%, #d23623); box-shadow: 0 0 5px 2px rgba(240,90,60,.5); }

.chat { width: 320px; display: flex; flex-direction: column; background: #fff; color: #39394d; }
.chd { height: 45px; display: flex; align-items: center; padding-left: 20px; flex: none; font-size: 13px; color: #232333; }
.chd b { margin: -2px 0 0 117px; font-weight: 600; }
.log { height: 613px; flex: none; display: flex; justify-content: space-between; }
.msgs { padding: 9px 0 0 19px; }
.m { width: max-content; min-height: 37px; padding: 8px 14px 6px 10px; border-radius: 12px; background: #f2f1f7; font-size: 14px; line-height: 20px; letter-spacing: -.1px; color: #39393f; }
.m + .m { margin-top: 5px; }
.f { height: 36px; line-height: 18px; padding-top: 13px; font-size: 12.500px; letter-spacing: -.05px; color: #747487; }
.f a { color: #0e71eb; }
.ctrack { width: 8px; margin: 1px 2px 0 0; height: 611px; background: #f2f1f7; border-radius: 4px; padding-top: 555px; }
.ctrack div { height: 56px; border-radius: 4px; background: #acacb9; }
.compose { border-top: 1px solid #ededf4; flex: 1; padding: 11px 15px 0 17px; font-size: 12px; }
.to { display: flex; align-items: center; height: 23px; }
.chip { margin-left: 9px; width: 73px; height: 23px; border-radius: 6px; background: #f2f1f7; display: flex; align-items: center; justify-content: center; gap: 4px; font-weight: 500; font-size: 11.300px; color: #232333; }
.fi { margin-left: auto; }
.file { margin: 0 21px 0 9px; }
.more { width: 25px; height: 24px; border: 1px solid #e2e2ea; border-radius: 7px; display: flex; gap: 2px; align-items: center; justify-content: center; }
.more i { width: 2px; height: 2px; background: #8b8b9b; }
.ph2 { margin-top: 8px; font-size: 12.500px; line-height: 18px; color: #747487; }

.task { height: 40px; background: linear-gradient(90deg, #d5dbe6, #dbe1e9 50%, #d3dde7); display: flex; align-items: stretch; }
.start { width: 48px; display: flex; align-items: center; justify-content: center; }
.search { width: 344px; background: #fff; border: 1px solid #c3c7cc; display: flex; align-items: center; padding-left: 11px; gap: 11px; font-size: 14.500px; color: #333; letter-spacing: -.1px; }
.ti { width: 49.200px; display: flex; align-items: center; justify-content: center; position: relative; }
.ti svg { width: 22px; height: 22px; }
.ti:nth-child(3) svg { width: 18px; height: 18px; }
.ti.on::after { content: ""; position: absolute; left: 5px; right: 5px; bottom: 0; height: 2px; background: #0078d7; }
.beta { font: bold 7px "Noto Sans", sans-serif; }
.tray { margin-left: auto; display: flex; align-items: center; }
.clock { width: 90px; text-align: center; font-size: 12px; line-height: 19px; letter-spacing: -.2px; color: #111; margin-left: -9px; }
.nt { margin: 6px 0 0 2px; }
.nt text { font: 12px "Noto Sans", sans-serif; }
.peek { width: 5px; height: 40px; margin-left: 11px; border-left: 1px solid #aab4be; }
```
